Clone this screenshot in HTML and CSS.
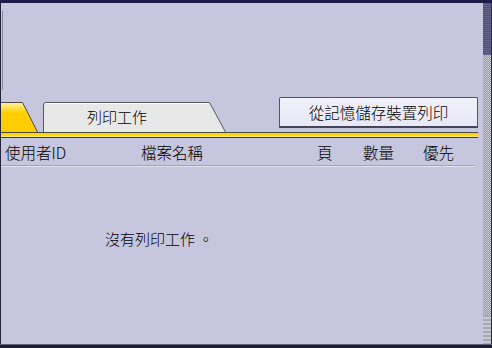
FILE: index.html
```html
<!DOCTYPE html>
<html lang="zh-Hant">
  <head>
    <meta charset="UTF-8" />
    <title>列印工作</title>
    <link rel="stylesheet" href="styles.css">
  </head>
  <body>
    <div class="screen">
      <div class="topbar"></div>
      <div class="middle">
        <div class="main">
          <!-- area above the tabs, only the edge of a panel shows -->
          <div class="top-area">
            <div class="panel-edge"></div>
          </div>

          <!-- tabs and the memory storage button -->
          <div class="tab-row">
            <div class="tab tab-active">
              <svg width="37" height="30" viewBox="0 0 37 30">
                <defs>
                  <linearGradient id="yel" x1="0" y1="0" x2="0" y2="1">
                    <stop offset="0" stop-color="#fff0a0" />
                    <stop offset="0.2" stop-color="#ffe04a" />
                    <stop offset="0.35" stop-color="#ffcf00" />
                    <stop offset="1" stop-color="#ffcc00" />
                  </linearGradient>
                </defs>
                <polygon points="0,0.5 21.5,0.5 36.5,30 0,30" fill="url(#yel)" />
                <polyline points="0,0.5 21.5,0.5 36.5,30" fill="none" stroke="#4a4a4a" stroke-width="1" />
              </svg>
            </div>
            <div class="tab tab-jobs">
              <svg width="184" height="30" viewBox="0 0 184 30">
                <path d="M0.5,30 L0.5,3 Q0.5,0.5 3,0.5 L166.5,0.5 L182.5,30" fill="#e8e8e8" stroke="#5a5a5a" stroke-width="1" />
                <line x1="2" y1="1.5" x2="166" y2="1.5" stroke="#ffffff" />
              </svg>
              <span class="tab-label">列印工作</span>
            </div>
            <button class="btn-memory">從記憶儲存裝置列印</button>
          </div>
          <div class="band"></div>

          <!-- column headings -->
          <div class="head-row">
            <span>使用者ID</span>
            <span>檔案名稱</span>
            <span>頁</span>
            <span>數量</span>
            <span>優先</span>
          </div>

          <p class="empty">沒有列印工作 。</p>
        </div>
        <div class="scroll">
          <div class="scroll-top"></div>
          <div class="scroll-track"></div>
          <div class="scroll-bottom"></div>
        </div>
      </div>
      <div class="bottombar"></div>
    </div>
  </body>
</html>
```

FILE: styles.css
```css
/* whole screen */
body {
  margin: 0;
  background: #1e1e30;
  font-family: "Noto Sans CJK TC", "Noto Sans", sans-serif;
  font-weight: 300;
  color: #000;
}

.screen {
  width: 492px;
  height: 348px;
  display: flex;
  flex-direction: column;
  overflow: hidden;
}

.topbar {
  height: 3px;
  background: #1b1d48;
}

.middle {
  display: flex;
  height: 341px;
  border-left: 1px solid #23233a;
  border-right: 1px solid #2a2a40;
}

.bottombar {
  height: 4px;
  border-top: 1px solid #5c5e7c;
  background: #1f1f33;
  box-sizing: border-box;
}

/* main lavender area */
.main {
  width: 482px;
  background: #c6c6de;
}

.top-area {
  height: 94px;
  padding-top: 8px;
  box-sizing: border-box;
}

.panel-edge {
  margin-left: 1px;
  height: 79px;
  border-left: 1px solid #8a8a96;
}

/* tabs */
.tab-row {
  height: 35px;
  display: flex;
  align-items: flex-end;
}

.tab {
  display: grid;
  height: 30px;
}

.tab svg {
  grid-area: 1 / 1;
  display: block;
}

.tab-jobs {
  margin-left: 5px;
}

.tab-label {
  grid-area: 1 / 1;
  padding: 3px 0 0 44px;
  font-size: 15px;
  line-height: 24px;
}

.btn-memory {
  margin: 0 5px 0 auto;
  align-self: flex-start;
  width: 199px;
  height: 31px;
  padding: 0;
  border: 1px solid #555560;
  border-bottom: 2px solid #44445a;
  border-radius: 2px 2px 0 0;
  background: linear-gradient(#f2f2fb, #e8e8f6);
  font-family: "Noto Sans CJK TC", "Noto Sans", sans-serif;
  font-weight: 300;
  font-size: 15.5px;
  color: #000;
}

/* yellow band under the tabs */
.band {
  height: 6px;
  margin-right: 5px;
  border-top: 1px solid #4a4a40;
  border-bottom: 1px solid #3c3c30;
  background: linear-gradient(#ffd800 0, #ffd200 50%, #ffe870 80%);
  box-sizing: border-box;
}

/* list heading */
.head-row {
  display: grid;
  grid-template-columns: 136px 176px 46px 60px 1fr;
  height: 27px;
  align-items: center;
  padding: 0 0 0 4px;
  margin-right: 8px;
  border-bottom: 1px solid #a4a4b0;
  box-shadow: 0 1px 0 #e4e4ec;
  font-size: 15.5px;
}

.empty {
  margin: 63px 0 0 104px;
  font-size: 15px;
  line-height: 20px;
}

/* scroll strip on the right */
.scroll {
  width: 8px;
  display: flex;
  flex-direction: column;
}

.scroll-top {
  height: 52px;
  background: repeating-linear-gradient(#4e5076 0 1px, #66688a 1px 2px);
}

.scroll-track {
  flex: 1;
  background: repeating-conic-gradient(#9a9aa8 0 25%, #c8c8d0 0 50%) 0 0 / 2px 2px;
}

.scroll-bottom {
  height: 29px;
  background: repeating-linear-gradient(#a8a8b2 0 2px, #cacad2 2px 4px);
}
```
